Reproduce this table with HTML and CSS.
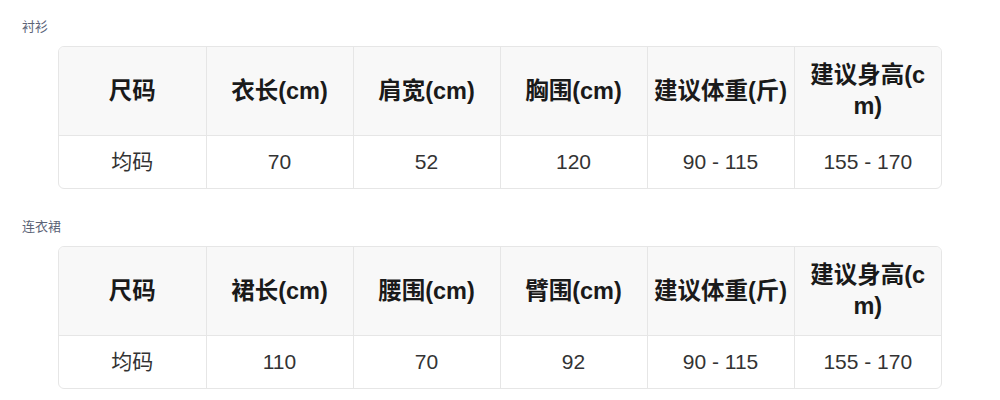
FILE: index.html
```html
<!DOCTYPE html>
<html lang="zh-CN">
<head>
<meta charset="utf-8">
<title>尺码表</title>
<link rel="stylesheet" href="styles.css">
</head>
<body>
<div class="page">
  <section class="section">
    <div class="label">衬衫</div>
    <div class="table-wrap">
      <table class="size-table">
        <thead>
          <tr><th>尺码</th><th>衣长(cm)</th><th>肩宽(cm)</th><th>胸围(cm)</th><th>建议体重(斤)</th><th>建议身高(cm)</th></tr>
        </thead>
        <tbody>
          <tr><td>均码</td><td>70</td><td>52</td><td>120</td><td>90 - 115</td><td>155 - 170</td></tr>
        </tbody>
      </table>
    </div>
  </section>
  <section class="section">
    <div class="label">连衣裙</div>
    <div class="table-wrap">
      <table class="size-table">
        <thead>
          <tr><th>尺码</th><th>裙长(cm)</th><th>腰围(cm)</th><th>臂围(cm)</th><th>建议体重(斤)</th><th>建议身高(cm)</th></tr>
        </thead>
        <tbody>
          <tr><td>均码</td><td>110</td><td>70</td><td>92</td><td>90 - 115</td><td>155 - 170</td></tr>
        </tbody>
      </table>
    </div>
  </section>
</div>
</body>
</html>
```

FILE: styles.css
```css
html, body {
  margin: 0;
  padding: 0;
  background: #ffffff;
}

body {
  font-family: "Liberation Sans", "Noto Sans CJK SC", sans-serif;
  color: #333333;
}

.page {
  padding: 18px 22px 0;
}

.section + .section {
  margin-top: 29px;
}

.label {
  font-size: 13px;
  line-height: 18px;
  color: #5c6477;
  margin-bottom: 10px;
}

.table-wrap {
  margin: 0 36px;
  border: 1px solid #e6e6e6;
  border-radius: 6px;
  overflow: hidden;
}

.size-table {
  width: 100%;
  table-layout: fixed;
  border-collapse: collapse;
}

.size-table th,
.size-table td {
  text-align: center;
  padding-left: 5px;
  padding-right: 5px;
  border-left: 1px solid #e6e6e6;
}

.size-table th:first-child,
.size-table td:first-child {
  border-left: none;
}

.size-table th {
  background: #f8f8f8;
  font-size: 23.5px;
  font-weight: bold;
  color: #1a1a1a;
  line-height: 31px;
  padding-top: 13px;
  padding-bottom: 13px;
  border-bottom: 1px solid #e6e6e6;
  word-break: break-all;
}

.size-table td {
  font-size: 21px;
  color: #333333;
  line-height: 30px;
  padding-top: 11px;
  padding-bottom: 11px;
}
```
